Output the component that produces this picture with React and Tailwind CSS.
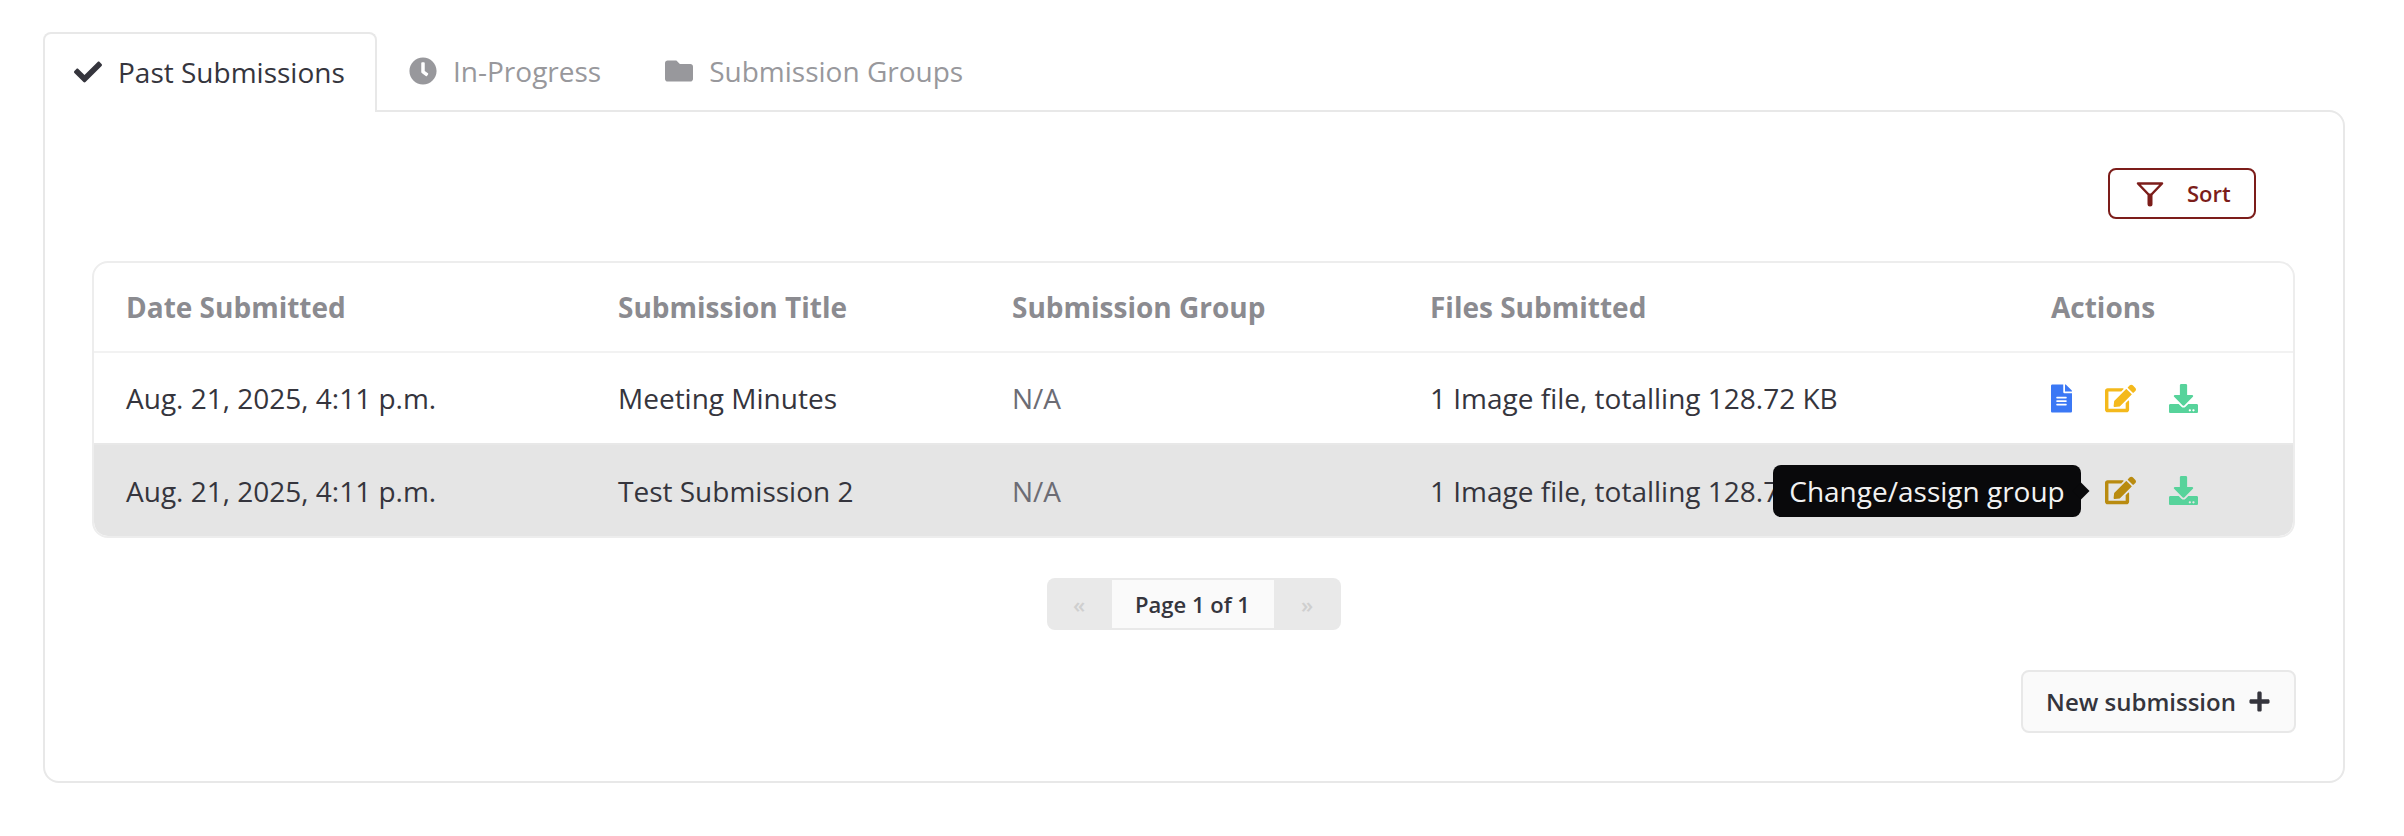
import { FaCheck, FaClock, FaFolder, FaPlus, FaFileAlt, FaEdit, FaDownload } from 'react-icons/fa';

const gridCols = 'grid grid-cols-[492px_394px_418px_621px_1fr] items-center';

const rows = [
  { date: 'Aug. 21, 2025, 4:11 p.m.', title: 'Meeting Minutes', group: 'N/A', files: '1 Image file, totalling 128.72 KB' },
  { date: 'Aug. 21, 2025, 4:11 p.m.', title: 'Test Submission 2', group: 'N/A', files: '1 Image file, totalling 128.72 KB', hovered: true },
];

function Tab({ icon, label }) {
  return (
    <div className="flex h-[78px] items-center gap-[16px] px-[32px] text-[#98989c]">
      {icon}
      <span>{label}</span>
    </div>
  );
}

function Row({ row }) {
  return (
    <div
      className={`${gridCols} pl-[32px] ${
        row.hovered ? 'h-[91px] rounded-b-[14px] bg-[#e5e5e5]' : 'h-[92px] border-b-2 border-[#e8e8e8] bg-white'
      }`}
    >
      <div>{row.date}</div>
      <div>{row.title}</div>
      <div className="text-[#6c6c74]">{row.group}</div>
      <div>{row.files}</div>
      <div className="relative flex items-center gap-[33px]">
        <FaFileAlt className="h-[29px] w-[21px] text-[#3b78f5]" />
        <FaEdit className={`h-[29px] w-[31px] ${row.hovered ? 'text-[#b98b10]' : 'text-[#f4b91c]'}`} />
        <FaDownload className="h-[29px] w-[29px] text-[#57d39b]" />
        {row.hovered && (
          <div className="absolute left-[-278px] top-1/2 flex h-[52px] w-[308px] -translate-y-1/2 items-center justify-center rounded-[8px] bg-[#09090b] text-[#f2f2f2]">
            Change/assign group
            <span className="absolute right-[-6px] top-1/2 h-[12px] w-[12px] -translate-y-1/2 rotate-45 bg-[#09090b]" />
          </div>
        )}
      </div>
    </div>
  );
}

export default function App() {
  return (
    <div className="min-h-[836px] bg-white pl-[43px] pr-[59px] pt-[32px] font-['Open_Sans',sans-serif] text-[28px] text-[#35353d]">
      <div className="relative z-10 -mb-[2px] flex items-start">
        <div className="flex h-[80px] w-[334px] items-center gap-[15px] rounded-t-[8px] border-2 border-b-0 border-[#e8e8e8] bg-white pb-[2px] pl-[28px]">
          <FaCheck className="h-[28px] w-[30px]" />
          <span>Past Submissions</span>
        </div>
        <Tab icon={<FaClock className="h-[28px] w-[28px]" />} label="In-Progress" />
        <Tab icon={<FaFolder className="h-[28px] w-[28px]" />} label="Submission Groups" />
      </div>

      <div className="h-[673px] rounded-[16px] rounded-tl-none border-2 border-[#e8e8e8] pl-[47px] pr-[48px] pt-[56px]">
        <div className="flex justify-end pr-[39px]">
          <button className="flex h-[51px] w-[148px] items-center gap-[23px] rounded-[8px] border-2 border-[#7c1d1a] pl-[26px] text-[22px] font-semibold text-[#7c1d1a]">
            <svg viewBox="0 0 28 26" className="h-[26px] w-[28px]" fill="none" stroke="currentColor" strokeWidth="2.5" strokeLinejoin="round">
              <path d="M2 2.5h24L14 15 2 2.5Z" />
              <path d="M14 15v8" strokeWidth="5" strokeLinecap="round" />
            </svg>
            Sort
          </button>
        </div>

        <div className="mt-[42px] overflow-hidden rounded-[16px] border-2 border-[#ededed]">
          <div className={`${gridCols} h-[90px] border-b-2 border-[#f2f2f2] pl-[32px] font-bold text-[#8b8b90]`}>
            <div>Date Submitted</div>
            <div>Submission Title</div>
            <div>Submission Group</div>
            <div>Files Submitted</div>
            <div>Actions</div>
          </div>
          {rows.map((row) => (
            <Row key={row.title} row={row} />
          ))}
        </div>

        <div className="mt-[40px] flex justify-center">
          <div className="flex h-[52px] w-[294px] items-center rounded-[8px] bg-[#e9e9e9] text-[22px] font-semibold">
            <span className="w-[65px] text-center text-[#cfcfcf]">«</span>
            <span className="flex h-[48px] w-[162px] items-center justify-center bg-[#fafafa]">Page 1 of 1</span>
            <span className="w-[67px] text-center text-[#cfcfcf]">»</span>
          </div>
        </div>

        <div className="mt-[40px] flex justify-end">
          <button className="-mr-[1px] flex h-[63px] w-[275px] items-center justify-center gap-[12px] rounded-[8px] border-2 border-[#e8e8e8] bg-[#fafafa] text-[24px] font-semibold">
            New submission
            <FaPlus className="h-[23px] w-[23px]" />
          </button>
        </div>
      </div>
    </div>
  );
}
